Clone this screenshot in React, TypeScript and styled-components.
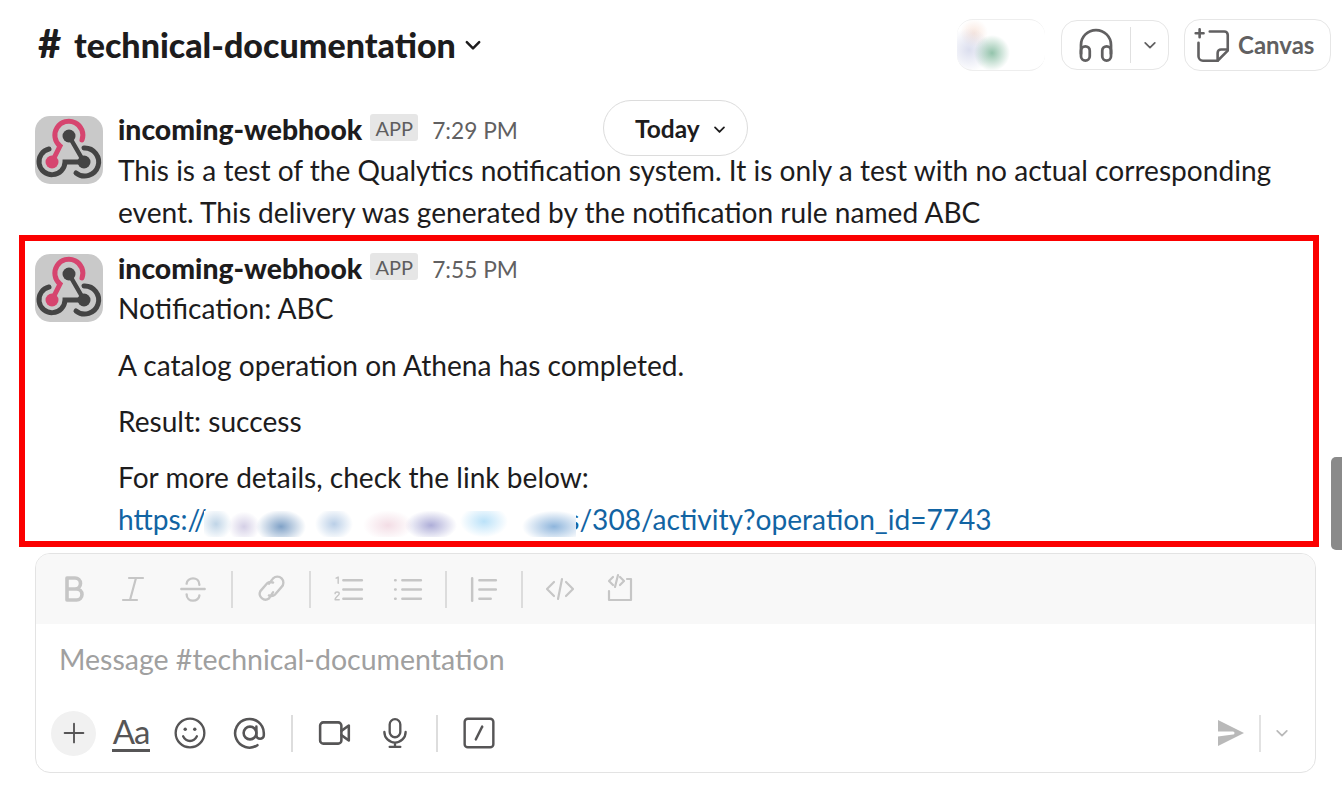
import React from "react";
import styled, { createGlobalStyle } from "styled-components";

const Global = createGlobalStyle`
  html, body { margin: 0; padding: 0; background: #fff; }
  body { font-family: Lato, "Open Sans", sans-serif; color: #1d1c1d; overflow: hidden; }
  #root { width: 1342px; height: 807px; }
`;

const Page = styled.div`
  position: relative;
  width: 1342px;
  height: 807px;
  display: flex;
  flex-direction: column;
  overflow: hidden;
`;

const Header = styled.header`
  height: 90px;
  padding: 0 11px 0 38px;
  box-sizing: border-box;
  display: flex;
  align-items: center;
  justify-content: space-between;
`;

const Title = styled.button`
  display: flex;
  align-items: center;
  gap: 8px;
  border: 0;
  padding: 0;
  margin-top: -3px;
  background: none;
  font: 900 34px/1 Lato, sans-serif;
  color: #1d1c1d;
`;

const TitleCaret = styled.span`
  display: flex;
  margin-top: 3px;
`;

const Hash = styled.span`
  display: inline-block;
  width: 36px;
  text-align: left;
  font-size: 40px;
  line-height: 34px;
`;

const HeaderActions = styled.div`
  display: flex;
  align-items: center;
  gap: 15px;
`;

const Smudge = styled.div`
  width: 88px;
  height: 50px;
  border-top: 1px solid #eee;
  border-bottom: 1px solid #eee;
  border-radius: 16px;
  margin-right: 1px;
  background:
    radial-gradient(circle at 35px 33px, rgba(120, 180, 150, 0.8) 0, rgba(120, 180, 150, 0) 18px),
    radial-gradient(circle at 12px 30px, rgba(190, 195, 225, 0.55) 0, rgba(190, 195, 225, 0) 22px),
    radial-gradient(circle at 17px 13px, rgba(245, 215, 200, 0.6) 0, rgba(245, 215, 200, 0) 14px);
`;

const HuddleButton = styled.div`
  width: 108px;
  height: 50px;
  box-sizing: border-box;
  border: 1px solid #e6e6e6;
  border-radius: 16px;
  display: flex;
  align-items: center;
  color: #616061;
`;

const HuddleIcon = styled.span`
  width: 68px;
  height: 36px;
  display: flex;
  align-items: center;
  justify-content: center;
  border-right: 1px solid #e0e0e0;
`;

const HuddleCaret = styled.span`
  flex: 1;
  display: flex;
  justify-content: center;
`;

const CanvasButton = styled.div`
  width: 147px;
  height: 52px;
  box-sizing: border-box;
  border: 1px solid #e6e6e6;
  border-radius: 16px;
  display: flex;
  align-items: center;
  gap: 8px;
  padding-left: 9px;
  font: 700 24px/1 Lato, sans-serif;
  color: #616061;
`;

const Message = styled.article`
  display: flex;
  gap: 15px;
`;

const FirstMessage = styled(Message)`
  padding: 26px 0 0 35px;
  height: 119px;
`;

const Framed = styled.section`
  margin: 0 0 0 19px;
  width: 1300px;
  height: 312px;
  box-sizing: border-box;
  border: 6px solid #fb0000;
  padding: 13px 0 0 10px;
`;

const Avatar = styled.svg`
  width: 68px;
  height: 68px;
  flex: none;
  border-radius: 15px;
  background: #c9c9c9;
`;

const Body = styled.div`
  flex: 1;
  min-width: 0;
`;

const Meta = styled.div<{ $h: number; $gap: number }>`
  display: flex;
  align-items: center;
  height: ${(p) => p.$h}px;
  margin-bottom: ${(p) => p.$gap}px;
`;

const Name = styled.span`
  font: 900 28.3px/28px Lato, sans-serif;
  color: #1d1c1d;
`;

const AppBadge = styled.span`
  margin: -3px 0 0 8px;
  width: 48px;
  height: 27px;
  display: flex;
  align-items: center;
  justify-content: center;
  background: #e6e6e6;
  border-radius: 3px;
  font: 400 20px/1 Lato, sans-serif;
  color: #5f5e5f;
`;

const Time = styled.span`
  margin: 5px 0 0 14px;
  font: 400 22.7px/1 Lato, sans-serif;
  color: #616061;
`;

const Text = styled.div<{ $after?: number }>`
  font: 400 28.1px/42px Lato, sans-serif;
  color: #1d1c1d;
  margin-bottom: ${(p) => p.$after ?? 0}px;
  white-space: nowrap;
`;

const Link = styled.a`
  color: #1264a3;
  text-decoration: none;
`;

const Redacted = styled.span`
  display: inline-block;
  width: 372px;
  height: 26px;
  margin: 0 -8.5px 0 -3px;
  vertical-align: -7px;
  position: relative;
  background:
    radial-gradient(ellipse 16px 16px at 12px 50%, rgba(150, 185, 215, 0.6), transparent),
    radial-gradient(ellipse 16px 15px at 40px 60%, rgba(170, 160, 205, 0.5), transparent),
    radial-gradient(ellipse 25px 17px at 77px 60%, rgba(85, 130, 180, 0.75), transparent),
    radial-gradient(ellipse 19px 16px at 130px 50%, rgba(140, 175, 215, 0.6), transparent),
    radial-gradient(ellipse 25px 15px at 184px 55%, rgba(225, 170, 190, 0.4), transparent),
    radial-gradient(ellipse 26px 15px at 227px 55%, rgba(130, 130, 195, 0.65), transparent),
    radial-gradient(ellipse 24px 16px at 280px 40%, rgba(150, 210, 245, 0.65), transparent),
    radial-gradient(ellipse 32px 16px at 350px 60%, rgba(95, 150, 205, 0.7), transparent),
    #fff;
`;

const TodayPill = styled.div`
  position: absolute;
  left: 603px;
  top: 100px;
  width: 145px;
  height: 56px;
  box-sizing: border-box;
  border: 1px solid #dcdcdc;
  border-radius: 28px;
  background: #fff;
  display: flex;
  align-items: center;
  gap: 13px;
  padding: 2px 0 0 31px;
  font: 700 24.5px/1 Lato, sans-serif;
  color: #1d1c1d;
`;

const Scrollbar = styled.div`
  position: absolute;
  left: 1331px;
  top: 457px;
  width: 11px;
  height: 93px;
  border-radius: 5px 0 0 5px;
  background: #8a8a8a;
`;

const Composer = styled.div`
  margin: 6px 0 0 35px;
  width: 1281px;
  height: 220px;
  box-sizing: border-box;
  border: 1px solid #e3e3e3;
  border-radius: 15px;
  display: flex;
  flex-direction: column;
  overflow: hidden;
`;

const FormatBar = styled.div`
  height: 70px;
  flex: none;
  background: #f8f8f8;
  display: flex;
  align-items: center;
  padding-left: 7px;
  color: #c6c6c6;
`;

const ToolSlot = styled.span<{ $w: number }>`
  width: ${(p) => p.$w}px;
  height: 36px;
  flex: none;
  display: flex;
  align-items: center;
  justify-content: center;
`;

const Divider = styled.span<{ $tone?: string; $m: number; $h?: number }>`
  width: 2px;
  height: ${(p) => p.$h ?? 37}px;
  flex: none;
  background: ${(p) => p.$tone ?? "#dadada"};
  margin: 0 ${(p) => p.$m}px;
`;

const Placeholder = styled.div`
  height: 70px;
  flex: none;
  margin-bottom: 2px;
  padding: 0 0 0 23px;
  display: flex;
  align-items: center;
  font: 400 28.5px/1 Lato, sans-serif;
  color: #a0a0a0;
`;

const ActionBar = styled.div`
  flex: 1;
  display: flex;
  align-items: center;
  padding: 0 0 0 15px;
  color: #565556;
  margin-top: -2px;
`;

const PlusButton = styled.span`
  width: 45px;
  height: 45px;
  flex: none;
  border-radius: 50%;
  background: #f1f1f1;
  display: flex;
  align-items: center;
  justify-content: center;
`;

const TextStyle = styled.span`
  margin: 0 10px 0 16px;
  width: 38px;
  height: 38px;
  flex: none;
  box-sizing: border-box;
  display: flex;
  align-items: center;
  justify-content: center;
  border-bottom: 3px solid #565556;
  font: 400 33px/1 Lato, sans-serif;
  letter-spacing: -1px;
  color: #565556;
`;

const SendGroup = styled.div`
  margin-left: auto;
  display: flex;
  align-items: center;
  color: #b9b9b9;
`;

const Svg = ({ s = 32, w = 2.2, children }: { s?: number; w?: number; children: React.ReactNode }) => (
  <svg width={s} height={s} viewBox="0 0 32 32" fill="none" stroke="currentColor" strokeWidth={w} strokeLinecap="round" strokeLinejoin="round">
    {children}
  </svg>
);

const Caret = ({ s = 16, w = 2 }: { s?: number; w?: number }) => (
  <svg width={s} height={s} viewBox="0 0 16 16" fill="none" stroke="currentColor" strokeWidth={w} strokeLinecap="round" strokeLinejoin="round">
    <path d="M2.5 5.5 8 11l5.5-5.5" />
  </svg>
);

const Webhook = () => (
  <Avatar viewBox="0 0 68 68" fill="none" strokeLinecap="round">
    <path d="M34 20 49 46" stroke="#444" strokeWidth="4.5" />
    <path d="M14 33A13 13 0 1 0 30 46H49" stroke="#444" strokeWidth="5" />
    <path d="M49 32A14 14 0 1 1 41 57" stroke="#444" strokeWidth="5" />
    <path d="M47 24A14 14 0 1 0 25 30L17 46" stroke="#d6456f" strokeWidth="5" />
    <circle cx="34" cy="20" r="6.500" fill="#444" />
    <circle cx="49" cy="46" r="6.500" fill="#444" />
    <circle cx="17" cy="46" r="6.500" fill="#d6456f" />
  </Avatar>
);

const formatTools: { w: number; icon?: React.ReactNode; div?: number }[] = [
  { w: 60, icon: <Svg w={3.6}><path d="M10 5h8a5.500 5.500 0 0 1 0 11h-8zM10 16h9.500a5.500 5.500 0 0 1 0 11H10z" /></Svg> },
  { w: 60, icon: <Svg><path d="M12 5h14M6 27h14M19 5l-6 22" /></Svg> },
  { w: 60, icon: <Svg s={34}><path d="M5 16h22M22 12c0-4-3-6-6-6s-6 2-6 5M10 21c0 4 3 6 6 6s6-2 6-5" /></Svg> },
  { w: 0, div: 8 },
  { w: 60, icon: <Svg s={34}><path d="M14 11l4-5a5.500 5.500 0 0 1 8 8l-6 7a5.500 5.500 0 0 1-6 1M18 19l-4 6a5.500 5.500 0 0 1-8-7l6-7a5.500 5.500 0 0 1 6-1" /></Svg> },
  { w: 0, div: 8 },
  { w: 58, icon: <Svg s={33} w={2.4}><path d="M11 7h18M11 16h18M11 25h18" /><path d="M4 5l2-1v6M3 20c0-2 4-2 4 0 0 2-4 3-4 6h4" strokeWidth="1.400" /></Svg> },
  { w: 60, icon: <Svg s={33} w={2.4}><path d="M11 7h18M11 16h18M11 25h18M4 7h.5M4 16h.5M4 25h.5" /></Svg> },
  { w: 0, div: 8 },
  { w: 56, icon: <Svg s={33} w={2.4}><path d="M5 5v22M12 7h16M12 16h16M12 25h11" /></Svg> },
  { w: 0, div: 10 },
  { w: 54, icon: <Svg s={32} w={2.2}><path d="M10 9l-7 7 7 7M22 9l7 7-7 7M18 6l-4 20" /></Svg> },
  { w: 64, icon: <Svg s={32} w={2.2}><path d="M24 6h4v21H6v-9M10 4 6 8l4 4M17 4l4 4-4 4M15 2l-3 12" /></Svg> },
];

export default function App() {
  return (
    <Page>
      <Global />
      <Header>
        <Title>
          <span><Hash>#</Hash>technical-documentation</span>
          <TitleCaret><Caret s={18} w={2.2} /></TitleCaret>
        </Title>
        <HeaderActions>
          <Smudge />
          <HuddleButton>
            <HuddleIcon>
              <Svg s={40} w={2.2}>
                <path d="M4 23v-7a12 12 0 0 1 24 0v7" />
                <rect x="4" y="17" width="7" height="11.500" rx="3.500" />
                <rect x="21" y="17" width="7" height="11.500" rx="3.500" />
              </Svg>
            </HuddleIcon>
            <HuddleCaret><Caret s={14} /></HuddleCaret>
          </HuddleButton>
          <CanvasButton>
            <Svg s={36} w={2.300}>
              <path d="M14 4h13a3 3 0 0 1 3 3v14l-9 9H8a4 4 0 0 1-4-4V14" />
              <path d="M30 20h-6a3 3 0 0 0-3 3v7M5 2v7M1.500 5.500h7" />
            </Svg>
            Canvas
          </CanvasButton>
        </HeaderActions>
      </Header>

      <FirstMessage>
        <Webhook />
        <Body>
          <Meta $h={26} $gap={7}>
            <Name>incoming-webhook</Name>
            <AppBadge>APP</AppBadge>
            <Time>7:29 PM</Time>
          </Meta>
          <Text>This is a test of the Qualytics notification system. It is only a test with no actual corresponding</Text>
          <Text>event. This delivery was generated by the notification rule named ABC</Text>
        </Body>
      </FirstMessage>

      <Framed>
        <Message>
          <Webhook />
          <Body>
            <Meta $h={28} $gap={5}>
              <Name>incoming-webhook</Name>
              <AppBadge>APP</AppBadge>
              <Time>7:55 PM</Time>
            </Meta>
            <Text $after={15}>Notification: ABC</Text>
            <Text $after={14}>A catalog operation on Athena has completed.</Text>
            <Text $after={14}>Result: success</Text>
            <Text>For more details, check the link below:</Text>
            <Text>
              <Link>https://<Redacted />s/308/activity?operation_id=7743</Link>
            </Text>
          </Body>
        </Message>
      </Framed>

      <Composer>
        <FormatBar>
          {formatTools.map((t, i) =>
            t.div ? <Divider key={i} $m={t.div} $tone="#dcdcdc" /> : <ToolSlot key={i} $w={t.w}>{t.icon}</ToolSlot>
          )}
        </FormatBar>
        <Placeholder>Message #technical-documentation</Placeholder>
        <ActionBar>
          <PlusButton>
            <Svg s={30} w={2}><path d="M16 6v20M6 16h20" /></Svg>
          </PlusButton>
          <TextStyle>Aa</TextStyle>
          <ToolSlot $w={60}>
            <Svg s={34} w={2.200}>
              <circle cx="16" cy="16" r="13.500" />
              <path d="M9.500 19c1.500 3 4 4.500 6.500 4.500s5-1.500 6.500-4.500" />
              <circle cx="11.500" cy="12.500" r="1.600" fill="currentColor" stroke="none" />
              <circle cx="20.500" cy="12.500" r="1.600" fill="currentColor" stroke="none" />
            </Svg>
          </ToolSlot>
          <ToolSlot $w={60}>
            <Svg s={34} w={2.400}>
              <circle cx="16" cy="16" r="6" />
              <path d="M22 10v8a3.500 3.500 0 0 0 7 0v-2a13.500 13.500 0 1 0-6 11.500" />
            </Svg>
          </ToolSlot>
          <Divider $m={11} $tone="#dddddd" />
          <ToolSlot $w={62}>
            <Svg s={34} w={2.400}>
              <rect x="2" y="6" width="20" height="20" rx="3" />
              <path d="M22 14l7-5v14l-7-5" />
            </Svg>
          </ToolSlot>
          <ToolSlot $w={58}>
            <Svg s={34} w={2.200}>
              <rect x="11" y="3" width="10" height="17" rx="5" />
              <path d="M6 15a10 10 0 0 0 20 0M16 25v4M11 29h10" />
            </Svg>
          </ToolSlot>
          <Divider $m={12} $tone="#dddddd" />
          <ToolSlot $w={58}>
            <Svg s={34} w={2.300}>
              <rect x="2.500" y="2.500" width="27" height="27" rx="3" />
              <path d="M19 10l-6 12" />
            </Svg>
          </ToolSlot>
          <SendGroup>
            <svg width="28" height="26" viewBox="0 0 28 26" fill="currentColor">
              <path d="M1 0 27 13 1 26v-9.500L16 14.500a1.500 1.500 0 0 0 0-3H1z" />
            </svg>
            <Divider $m={14} $tone="#e2e2e2" $h={37} />
            <Caret s={14} />
            <ToolSlot $w={26} />
          </SendGroup>
        </ActionBar>
      </Composer>

      <TodayPill>
        Today <Caret s={13} w={2.200} />
      </TodayPill>
      <Scrollbar />
    </Page>
  );
}
